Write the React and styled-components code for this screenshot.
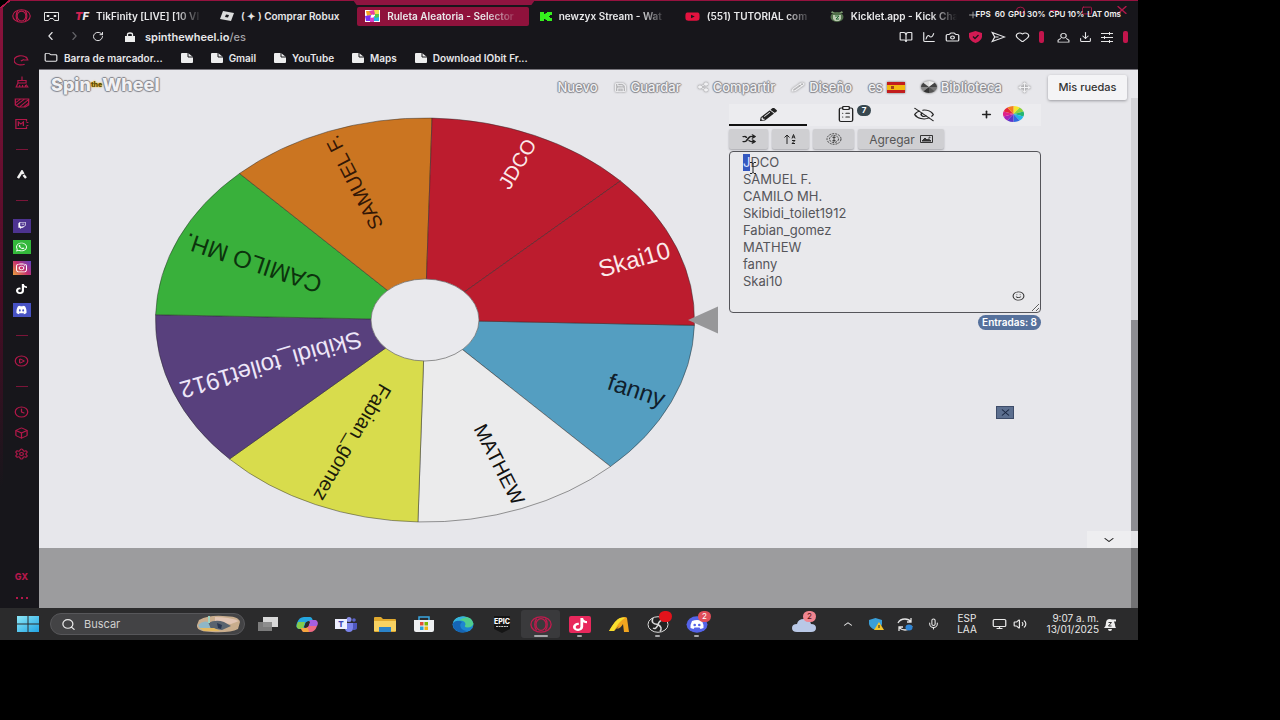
import React, { useEffect, useRef } from "react";
import styled, { createGlobalStyle, css } from "styled-components";
import {
  ChevronLeft, ChevronRight, RotateCw, Lock, Folder, BookOpen, ChartSpline, Camera, SendHorizontal, Heart,
  User, Download, Plus, X, Save, Share2, Pencil, Move, EyeOff, ClipboardList, Shuffle, Smile, Clock, Box as BoxIcon,
  Settings, CirclePlay, ChevronDown, ChevronUp, Mic, Monitor, Volume2, RefreshCw, Search, Square, Minus,
} from "lucide-react";
import { FaTwitch, FaWhatsapp, FaInstagram, FaTiktok, FaDiscord, FaYoutube, FaPencilAlt } from "react-icons/fa";

const pink = "#b3184a";
const ui = '"Inter", "Open Sans", sans-serif';

const GlobalStyle = createGlobalStyle`
  * { box-sizing: border-box; }
  body { margin: 0; background: #000; font-family: ${ui}; }
  button, textarea, input { font: inherit; color: inherit; }
  button { border: 0; background: none; padding: 0; }
  a { color: inherit; text-decoration: none; }
  svg { display: block; flex: none; }
`;

const Screen = styled.div`
  min-height: 100vh;
  padding: 0 142px 80px 0;
  display: flex;
  background: #000;
`;
const Desktop = styled.div`
  flex: 1;
  min-width: 0;
  display: flex;
  flex-direction: column;
`;
const Browser = styled.div`
  position: relative;
  flex: 1;
  display: flex;
  background: #17161b;
  border-top: 1px solid #96123f;
`;
const EdgeGlow = styled.div`
  position: absolute;
  left: 0;
  top: 6px;
  width: 3px;
  height: 480px;
  background: linear-gradient(#8d133d, #4a0c25 60%, #17161b);
`;
const TabNotch = styled.div`
  position: absolute;
  left: 353px;
  top: -1px;
  width: 182px;
  height: 5px;
  background: #8f1440;
  clip-path: polygon(0 0, 100% 0, 98% 100%, 2% 100%);
`;
const Corner = styled.div`
  position: absolute;
  left: 0;
  top: -1px;
  width: 10px;
  height: 8px;
  background: linear-gradient(141deg, #000 45%, ${pink} 46%, ${pink} 58%, transparent 59%);
`;

/* ---- side bar ---- */
const Side = styled.nav`
  width: 39px;
  display: flex;
  flex-direction: column;
  padding-left: 4px;
  color: ${pink};
`;
const SideButton = styled.button`
  height: 21px;
  display: flex;
  align-items: center;
  justify-content: center;
`;
const SideHome = styled(SideButton)`
  height: 30px;
  margin-bottom: 19px;
`;
const Divider = styled.div`
  height: 30px;
  display: flex;
  align-items: center;
  justify-content: center;
  &::after { content: ""; width: 12px; height: 1px; background: #7b1539; }
`;
const Spacer = styled.div`flex: 1;`;
const AppTile = styled.span`
  width: ${(p) => p.$w || 18}px;
  height: ${(p) => p.$h || 14}px;
  border-radius: ${(p) => (p.$w ? 2 : 0)}px;
  display: flex;
  align-items: center;
  justify-content: center;
  background: ${(p) => p.$bg};
  color: #fff;
`;
const GX = styled.b`font-size: 9px; font-weight: 800;`;

const IconBox = styled.span`
  display: inline-flex;
  flex: none;
  svg { width: ${(p) => p.$w}px; height: ${(p) => p.$h}px; }
`;
const Icon = ({ of: Glyph, w = 14, h = 12, ...rest }) => (
  <IconBox $w={w} $h={h}><Glyph preserveAspectRatio="none" aria-hidden="true" {...rest} /></IconBox>
);

/* ---- browser chrome ---- */
const Main = styled.div`
  flex: 1;
  min-width: 0;
  display: flex;
  flex-direction: column;
`;
const Chrome = styled.header`
  height: 69px;
  display: flex;
  flex-direction: column;
  color: #e8e8ea;
  font-size: 10px;
  font-weight: 600;
  border-bottom: 1px solid #77757c;
`;
const TabRow = styled.div`
  height: 27px;
  padding-top: 3px;
  display: flex;
  align-items: center;
`;
const Pinned = styled.button`
  width: 28px;
  display: flex;
  justify-content: flex-end;
  padding-right: 8px;
  padding-left: 12px;
`;
const Tabs = styled.div`
  flex: 1;
  min-width: 0;
  display: flex;
  align-items: center;
`;
const Tab = styled.button`
  flex: 29 1 0;
  min-width: 0;
  height: 19px;
  display: flex;
  align-items: center;
  gap: 7px;
  padding: 0 10px 0 8px;
  ${(p) => p.$active && css`
    flex-grow: 35;
    margin-right: 3px;
    background: #8f123c;
    border-radius: 2px;
  `}
`;
const TabText = styled.span`
  flex: 1;
  min-width: 0;
  overflow: hidden;
  white-space: nowrap;
  text-align: left;
  ${(p) => p.$fade && css`mask-image: linear-gradient(90deg, #000 75%, transparent);`}
`;
const WindowArea = styled.div`
  width: 171px;
  height: 24px;
  position: relative;
  display: flex;
  align-items: center;
  color: ${pink};
`;
const WindowButtons = styled.div`
  flex: 1;
  display: flex;
  justify-content: flex-end;
  align-items: center;
  gap: 21px;
  padding: 0 8px 10px 0;
`;
const NewTab = styled.button`color: #aaa;`;
const Stats = styled.div`
  position: absolute;
  right: 17px;
  top: 4px;
  display: flex;
  gap: 3px;
  color: #f2f2f2;
  font: 600 8px/12px ${ui};
  white-space: nowrap;
`;
const AddressRow = styled.div`
  height: 18px;
  display: flex;
  align-items: center;
  padding: 0 10px 0 5px;
`;
const AddressNav = styled.div`
  display: flex;
  align-items: center;
  gap: 11px;
  margin-right: 21px;
`;
const Url = styled.span`
  margin-left: 10px;
  font-size: 11px;
  span { color: #a5a5aa; font-weight: 500; }
`;
const Tools = styled.div`
  margin-left: auto;
  display: flex;
  align-items: center;
  gap: 9px;
`;
const PinkBar = styled.i`
  width: 5px;
  height: 12px;
  border-radius: 2px;
  background: #c2154c;
  margin-right: ${(p) => (p.$gap ? 4 : 0)}px;
`;
const Bookmarks = styled.div`
  height: 23px;
  display: flex;
  align-items: center;
  gap: 18px;
  padding-left: 5px;
  a { display: flex; align-items: center; gap: 6px; white-space: nowrap; }
`;

/* ---- web page ---- */
const Viewport = styled.div`
  flex: 1;
  display: flex;
  background: #e7e7eb;
`;
const Page = styled.div`
  flex: 1;
  min-width: 0;
  display: flex;
  flex-direction: column;
`;
const SiteHeader = styled.header`
  height: 30px;
  display: flex;
  align-items: center;
  padding: 4px 4px 0 12px;
  color: #f1f1f3;
  font-size: 13px;
  font-weight: 500;
`;
const outline = css`
  text-shadow: 1px 0 1px #85858b, -1px 0 1px #85858b, 0 1px 1px #85858b, 0 -1px 1px #85858b;
`;
const Logo = styled.a`
  display: flex;
  align-items: center;
  font-size: 18px;
  line-height: 20px;
  font-weight: 800;
  padding-bottom: 4px;
  ${outline}
  small {
    font-size: 7px;
    line-height: 8px;
    color: #5b4a10;
    text-shadow: 0 0 2px #eab308, 0 0 1px #eab308;
  }
`;
const SiteNav = styled.nav`
  margin-left: auto;
  display: flex;
  align-items: center;
  gap: 16px;
  margin-right: 17px;
  a { display: flex; align-items: center; gap: 4px; ${outline} }
  svg { filter: drop-shadow(0 0 1px #666); }
`;
const MyWheels = styled.button`
  width: 79px;
  height: 25px;
  background: #f4f4f6;
  border-radius: 2px;
  box-shadow: 0 1px 3px #9a9a9f;
  color: #333;
  font-size: 11px;
  font-weight: 500;
`;
const Body = styled.main`
  flex: 1;
  display: grid;
  grid-template-columns: minmax(0, 1fr) 312px;
  padding-right: 90px;
  align-items: start;
`;
const WheelPane = styled.section`
  display: flex;
  justify-content: flex-end;
  padding: 17px 9px 0 0;
  svg { width: 100%; max-width: 565px; height: auto; }
`;
const Panel = styled.section`
  padding-top: 4px;
  display: flex;
  flex-direction: column;
  color: #222;
`;
const PanelTabs = styled.div`
  display: grid;
  grid-template-columns: repeat(4, 1fr);
  height: 22px;
  background: #ececef;
`;
const PanelTab = styled.button`
  position: relative;
  display: flex;
  align-items: center;
  justify-content: center;
  gap: 10px;
  border-bottom: 2px solid ${(p) => (p.$active ? "#111" : "transparent")};
`;
const Badge = styled.span`
  position: absolute;
  right: 14px;
  top: 1px;
  width: 14px;
  height: 11px;
  border-radius: 6px;
  background: #37474f;
  color: #fff;
  font-size: 8px;
  line-height: 11px;
  font-weight: 700;
`;
const ToolRow = styled.div`
  display: flex;
  gap: 4px;
  padding: 3px 0 2px;
`;
const ToolButton = styled.button`
  width: ${(p) => p.$w}px;
  height: 20px;
  display: flex;
  align-items: center;
  justify-content: center;
  gap: 5px;
  border-radius: 2px;
  background: #cfcfd2;
  box-shadow: 0 1px 2px #a5a5aa;
  color: ${(p) => (p.$muted ? "#555" : "#222")};
  font-size: ${(p) => (p.$muted ? 12 : 11)}px;
`;
const EntriesBox = styled.div`
  position: relative;
  display: flex;
`;
const Entries = styled.textarea`
  width: 100%;
  height: 162px;
  padding: 2px 13px;
  border: 1px solid #55555a;
  border-radius: 4px;
  background: #e9e9ec;
  color: #55555a;
  font-size: 13px;
  line-height: 17px;
  outline: 0;
  &::selection { background: #3558c0; color: #dfe6ff; }
`;
const EmojiButton = styled.button`
  position: absolute;
  right: 16px;
  bottom: 8px;
  color: #333;
`;
const Pointer = styled.svg`
  position: absolute;
  left: 20px;
  top: 11px;
`;
const Count = styled.span`
  align-self: flex-end;
  margin-top: 2px;
  padding: 0 4px;
  border-radius: 8px;
  background: #56719c;
  color: #fff;
  font-size: 10px;
  line-height: 15px;
  font-weight: 600;
`;
const CloseAd = styled.button`
  align-self: flex-end;
  width: 18px;
  height: 13px;
  margin: 76px 27px 0 0;
  display: flex;
  align-items: center;
  justify-content: center;
  background: #5c6f8f;
  border: 1px solid #3d4c69;
  color: #16233d;
`;
const Collapse = styled.button`
  align-self: flex-end;
  width: 44px;
  height: 17px;
  display: flex;
  align-items: center;
  justify-content: center;
  background: #eeeef0;
  color: #222;
`;
const AdBand = styled.footer`
  height: 60px;
  background: #9c9c9e;
`;
const ScrollTrack = styled.div`
  width: 7px;
  padding-top: 28px;
  display: flex;
  flex-direction: column;
`;
const ScrollPart = styled.div`
  ${(p) => (p.$h ? `height: ${p.$h}px;` : "flex: 1;")}
  background: ${(p) => p.$bg};
`;

/* ---- task bar ---- */
const Taskbar = styled.footer`
  height: 32px;
  display: flex;
  align-items: center;
  padding: 0 17px;
  background: #2b2b2c;
  color: #e9e9e9;
`;
const SearchBox = styled.label`
  width: 195px;
  height: 22px;
  margin: 0 3px 0 11px;
  display: flex;
  align-items: center;
  gap: 8px;
  padding: 0 3px 0 10px;
  border: 1px solid #57575a;
  border-radius: 11px;
  background: #434345;
  input {
    flex: 1;
    min-width: 0;
    padding: 0;
    border: 0;
    background: none;
    font-size: 11px;
    outline: 0;
  }
  input::placeholder { color: #d0d0d0; opacity: 1; }
`;
const TaskButton = styled.button`
  position: relative;
  width: 39px;
  height: 28px;
  display: flex;
  align-items: center;
  justify-content: center;
  border-radius: 3px;
  background: ${(p) => (p.$active ? "#3a3a3c" : "none")};
  &::after {
    content: "";
    position: absolute;
    bottom: 1px;
    width: ${(p) => (p.$active ? 14 : p.$open ? 5 : 0)}px;
    height: 2px;
    border-radius: 1px;
    background: #a8a8aa;
  }
`;
const Notice = styled.span`
  position: absolute;
  right: ${(p) => p.$right || 5}px;
  top: 1px;
  width: 13px;
  height: 11px;
  border-radius: 6px;
  background: ${(p) => p.$bg};
  color: ${(p) => p.$fg || "#fff"};
  font-size: 8px;
  line-height: 11px;
`;
const Tray = styled.div`
  margin-left: auto;
  display: flex;
  align-items: center;
`;
const TrayButton = styled.button`
  position: relative;
  width: ${(p) => p.$w}px;
  height: 28px;
  display: flex;
  align-items: center;
  justify-content: center;
`;
const TrayText = styled.div`
  width: ${(p) => p.$w}px;
  font-size: 10px;
  line-height: 11px;
  white-space: nowrap;
  text-align: ${(p) => p.$align || "center"};
`;

const OperaLogo = ({ w, h }) => (
  <svg width={w} height={h} viewBox="0 0 20 16" preserveAspectRatio="none" fill="none" stroke="#c01b4e" strokeWidth="1.2" aria-hidden="true">
    <ellipse cx="10" cy="8" rx="9.2" ry="7.2" />
    <ellipse cx="10" cy="8" rx="4.6" ry="5.6" />
    <path d="M6 2.4C3.8 5 3.8 11 6 13.6M14 2.4c2.2 2.6 2.2 8.6 0 11.2" />
  </svg>
);
const PageIcon = () => (
  <svg width="12" height="10" viewBox="0 0 12 10" fill="#ededee" aria-hidden="true">
    <path d="M0 1q0-1 1-1h6l5 4v5q0 1-1 1H1Q0 10 0 9z" /><path d="M7 0v4h5" fill="none" stroke="#17161b" />
  </svg>
);
const Broom = (p) => (
  <svg viewBox="0 0 24 24" fill="none" stroke="currentColor" strokeWidth="2" {...p}>
    <path d="M12 1v8M5 9h14v5H5zM5 14l-3 8h20l-3-5M8 22v-4M13 22v-4M18 22v-4" />
  </svg>
);
const Screencap = (p) => (
  <svg viewBox="0 0 24 24" fill="none" stroke="currentColor" strokeWidth="2" {...p}>
    <path d="M2 4h20v12l-5 4H7l-5-4zM3 11l7-7M3 17 16 4M9 19 21 6M15 19l7-7" />
  </svg>
);
const Modbox = (p) => (
  <svg viewBox="0 0 24 24" fill="none" stroke="currentColor" strokeWidth="2" {...p}>
    <path d="M20 7V3H3v18h17v-4M7 16V8l4 4 4-4v8M20 9h3M20 15h3" />
  </svg>
);
const Speed = (p) => (
  <svg viewBox="0 0 24 24" fill="none" stroke="currentColor" strokeWidth="2.400" {...p}>
    <path d="M17 20a11 10 0 1 1 5-9h-6M11 13l5-3M19 4l2 3" />
  </svg>
);
const Peak = () => (
  <svg width="10" height="9" viewBox="0 0 10 9" fill="none" stroke="#f0f0f0" strokeWidth="2.4" aria-hidden="true">
    <path d="M1 8 5 1.5 6.5 4M6.500 5 9 8" />
  </svg>
);
const Goggles = () => (
  <svg width="15" height="9" viewBox="0 0 15 9" fill="none" stroke="#e5e5e5" aria-hidden="true">
    <path d="M.5.5h14v8h-4l-1.500-2h-3l-1.500 2h-4z" /><path d="M3 3.500h2v1H3zM10 3.500h2v1h-2z" />
  </svg>
);
const Monogram = styled.i`
  width: 14px;
  font-size: 11px;
  line-height: 12px;
  font-weight: 800;
  color: #eee;
  b { color: #d32352; }
`;
const Roblox = () => (
  <svg width="14" height="10" viewBox="0 0 14 10" aria-hidden="true">
    <path d="M3 0 14 2 11 10 0 8z" fill="#dcdcdc" /><path d="M6 3.500 9 4 8 6.500 5 6z" fill="#17161b" />
  </svg>
);
const RouletteIcon = () => (
  <svg width="15" height="12" viewBox="0 0 15 12" aria-hidden="true">
    <path fill="#fff" d="M0 0h15v12H0z" />
    <path d="M1 1h4l2 4-5 1z" fill="#f5a623" /><path d="M9 0h5v4l-5 1z" fill="#f4e04d" />
    <path d="M0 6l6-1-1 6H1z" fill="#7b2ff2" /><path d="M9 6l5 1v4H7z" fill="#28b6e8" /><path d="M4 1l5-1 1 4-3 2z" fill="#e83fa0" /><path d="M10 4h4v3l-4 1z" fill="#56c94a" /><path d="M5 8l4-1v5H5z" fill="#d840c8" />
    <circle cx="7.500" cy="6" r="1.500" fill="#fff" />
  </svg>
);
const Kick = () => (
  <svg width="12" height="9" viewBox="0 0 12 9" fill="#35f01d" aria-hidden="true">
    <path d="M0 0h4v2h1.500V1H7V0h5v3h-2v1H9v1h1v1h2v3H7V8H5.500V7H4v2H0z" />
  </svg>
);
const Kicklet = () => (
  <svg width="14" height="11" viewBox="0 0 14 11" aria-hidden="true">
    <ellipse cx="7" cy="6" rx="6.500" ry="5" fill="#52704b" /><path d="M2 0 5 2H1zM12 0 9 2h4z" fill="#7d9a73" />
    <path d="M3 4h8v4l-2 2H5L3 8z" fill="#b9c9b0" /><path d="M5 5h4L6 8h3" stroke="#263" fill="none" />
  </svg>
);
const ShieldCheck = () => (
  <svg width="13" height="12" viewBox="0 0 13 12" aria-hidden="true">
    <path d="M6.500 0 13 2v4q-1 4-6.500 6Q1 10 0 6V2z" fill="#d11a53" /><path d="m4 5.500 2 2 3.500-3.500" fill="none" stroke="#17161b" strokeWidth="1.300" />
  </svg>
);
const SendArrow = (p) => (
  <svg viewBox="0 0 24 24" fill="none" stroke="currentColor" strokeWidth="2" {...p}>
    <path d="M2 3 22 12 2 21l4-9zM6 12h6" />
  </svg>
);
const Person = (p) => (
  <svg viewBox="0 0 24 24" fill="none" stroke="currentColor" strokeWidth="2" {...p}>
    <circle cx="12" cy="8" r="5" /><path d="M7 14 2 18v4h20v-4l-5-4" />
  </svg>
);
const Sliders = () => (
  <svg width="13" height="11" viewBox="0 0 13 11" fill="none" stroke="#e5e5e5" aria-hidden="true">
    <path d="M0 1.500h12M0 5.500h12M0 9.500h12M8.500 0v3M3.500 4v3M8.500 8v3" />
  </svg>
);
const SpainFlag = () => (
  <svg width="18" height="11" viewBox="0 0 18 11" aria-hidden="true">
    <path fill="#c21d1d" d="M0 0h18v11H0z" /><path fill="#f2b90f" d="M0 3h18v5H0z" /><path fill="#a5421a" d="M4 4h3v3H4z" />
  </svg>
);
const pieColors = ["#f6e52b", "#8bd33c", "#23b573", "#22b5e9", "#2d6be0", "#5d35c9", "#a724b8", "#e0218a", "#e5273b", "#f47d20"];
const Pie = ({ w, h, colors }) => (
  <svg width={w} height={h} viewBox="-10 -10 20 20" preserveAspectRatio="none" aria-hidden="true">
    {colors.map((c, i) => {
      const a = (i * 2 * Math.PI) / colors.length - 1.57;
      const b = a + (2 * Math.PI) / colors.length;
      return <path key={i} fill={c} d={`M0 0L${10 * Math.cos(a)} ${10 * Math.sin(a)}A10 10 0 0 1 ${10 * Math.cos(b)} ${10 * Math.sin(b)}z`} />;
    })}
  </svg>
);
const SortIcon = () => (
  <svg width="13" height="10" viewBox="0 0 13 10" fill="none" stroke="#222" aria-hidden="true">
    <path d="M3 10V1M.5 3.500 3 1l2.500 2.500M8 4.500l1.500-4 1.500 4M8.500 3h2M8 6.500h3L8 9.500h3" />
  </svg>
);
const SpiralIcon = () => (
  <svg width="16" height="12" viewBox="0 0 16 12" fill="none" stroke="#444" aria-hidden="true">
    <ellipse cx="8" cy="6" rx="7" ry="5.300" strokeDasharray="2 1" /><ellipse cx="8" cy="6" rx="4.500" ry="3.500" strokeDasharray="2 1" />
    <path d="M8 3v6M6.500 4.500h3M6.500 7.500h3" />
  </svg>
);
const ImageIcon = () => (
  <svg width="13" height="8" viewBox="0 0 13 8" fill="none" stroke="#333" aria-hidden="true">
    <path d="M.5.5h12v7H.5z" /><path d="m2 6 3-3 2 2 1.500-1L11 6z" fill="#333" /><circle cx="9.500" cy="2.500" r=".5" />
  </svg>
);

/* ---- wheel ---- */
const slices = [
  { text: "fanny", fill: "#549ec1", ink: "#10202c", size: 24 },
  { text: "MATHEW", fill: "#ebebec", ink: "#111", size: 20 },
  { text: "Fabian_gomez", fill: "#d8dc4c", ink: "#1d1d0a", size: 20 },
  { text: "Skibidi_toilet1912", fill: "#58407d", ink: "#eee6f8", size: 24 },
  { text: "CAMILO MH.", fill: "#39b03b", ink: "#0c330d", size: 24 },
  { text: "SAMUEL F.", fill: "#cb7521", ink: "#331706", size: 20 },
  { text: "JDCO", fill: "#bc1c2e", ink: "#fbe9ea", size: 20 },
  { text: "Skai10", fill: "#bc1c2e", ink: "#fbe9ea", size: 24 },
];
const CX = 425, CY = 320, RX = 269.5, RY = 202;
const at = (deg, k = 1) => {
  const t = (deg * Math.PI) / 180;
  return [CX + k * RX * Math.cos(t), CY + k * RY * Math.sin(t)];
};
const Wheel = () => (
  <svg viewBox="155 117 565 406" role="img" aria-label="Ruleta" fontFamily='"Liberation Sans", Arial, sans-serif'>
    {slices.map((s, i) => {
      const start = 1.5 + i * 45;
      const [x1, y1] = at(start);
      const [x2, y2] = at(start + 45);
      return <path key={s.text} d={`M${CX} ${CY}L${x1} ${y1}A${RX} ${RY} 0 0 1 ${x2} ${y2}z`} fill={s.fill} stroke="#2b2b2b" strokeOpacity=".6" strokeWidth=".8" />;
    })}
    {slices.map((s, i) => {
      const [x, y] = at(24 + i * 45, 0.972);
      const turn = (Math.atan2(y - CY, x - CX) * 180) / Math.PI;
      return (
        <text key={s.text} transform={`translate(${x} ${y}) rotate(${turn})`} textAnchor="end" dy=".33em" fontSize={s.size} fill={s.ink}>{s.text}</text>
      );
    })}
    <ellipse cx={CX} cy={CY} rx="54" ry="41" fill="#e9e9ed" stroke="#666" strokeWidth=".7" />
    <path d="M688 320 718 306.500v27z" fill="#979799" />
  </svg>
);

const names = ["JDCO", "SAMUEL F.", "CAMILO MH.", "Skibidi_toilet1912", "Fabian_gomez", "MATHEW", "fanny", "Skai10"];

const EntriesEditor = () => {
  const ref = useRef(null);
  useEffect(() => {
    ref.current.focus({ preventScroll: true });
    ref.current.setSelectionRange(0, 1);
  }, []);
  return (
    <EntriesBox>
      <Entries ref={ref} aria-label="Lista de entradas" spellCheck={false} defaultValue={names.join("\n")} />
      <Pointer width="8" height="12" viewBox="0 0 8 12" fill="none" stroke="#222" aria-hidden="true"><path d="M1 .5h2l1 1 1-1h2M4 1v10M1 11.500h2l1-1 1 1h2" /></Pointer>
      <EmojiButton aria-label="Emoji"><Icon of={Smile} w={13} h={10} /></EmojiButton>
    </EntriesBox>
  );
};

const tabs = [
  { icon: <Monogram><b>T</b>F</Monogram>, text: "TikFinity [LIVE] [10 VI", fade: true },
  { icon: <Roblox />, text: "( ✦ ) Comprar Robux" },
  { icon: <RouletteIcon />, text: "Ruleta Aleatoria - Selector", active: true, fade: true },
  { icon: <Kick />, text: "newzyx Stream - Wat", fade: true },
  { icon: <IconBox $w={15} $h={11}><FaYoutube color="#e3123f" preserveAspectRatio="none" /></IconBox>, text: "(551) TUTORIAL com", fade: true },
  { icon: <Kicklet />, text: "Kicklet.app - Kick Cha", fade: true },
];
const tiles = [
  [FaTwitch, "#4d3390", "Twitch"],
  [FaWhatsapp, "#33b83b", "WhatsApp"],
  [FaInstagram, "linear-gradient(45deg, #e9a33c, #c52f70 50%, #5b43c4)", "Instagram"],
  [FaTiktok, "none", "TikTok"],
  [FaDiscord, "#4752c4", "Discord"],
];

const Sidebar = () => (
  <Side>
    <SideHome aria-label="Opera"><OperaLogo w={19} h={14} /></SideHome>
    <SideButton aria-label="GX Control"><Icon of={Speed} w={15} h={11} /></SideButton>
    <SideButton aria-label="GX Cleaner"><Icon of={Broom} w={14} h={12} /></SideButton>
    <SideButton aria-label="Captura"><Icon of={Screencap} w={16} h={12} /></SideButton>
    <SideButton aria-label="Mods"><Icon of={Modbox} w={15} h={12} /></SideButton>
    <Divider />
    <SideButton aria-label="Pico"><Peak /></SideButton>
    <Divider />
    {tiles.map(([Glyph, bg, name]) => (
      <SideButton key={name} aria-label={name}><AppTile $bg={bg}><Icon of={Glyph} w={name === "Twitch" ? 8 : 11} h={name === "Twitch" ? 7 : 10} /></AppTile></SideButton>
    ))}
    <Divider />
    <SideButton aria-label="Reproductor"><Icon of={CirclePlay} w={15} h={12} /></SideButton>
    <Divider />
    <SideButton aria-label="Historial"><Icon of={Clock} w={15} h={12} /></SideButton>
    <SideButton aria-label="Extensiones"><Icon of={BoxIcon} w={15} h={12} /></SideButton>
    <SideButton aria-label="Ajustes"><Icon of={Settings} w={15} h={12} /></SideButton>
    <Spacer />
    <SideButton><GX>GX</GX></SideButton>
    <SideButton aria-label="Más"><svg width="12" height="2" viewBox="0 0 12 2" fill={pink}><path d="M0 0h2v2H0zM5 0h2v2H5zM10 0h2v2h-2z" /></svg></SideButton>
  </Side>
);

const BrowserChrome = () => (
  <Chrome>
    <TabRow>
      <Pinned aria-label="GX Corner"><Goggles /></Pinned>
      <Tabs>
        {tabs.map((t) => (
          <Tab key={t.text} $active={t.active}>{t.icon}<TabText $fade={t.fade}>{t.text}</TabText></Tab>
        ))}
      </Tabs>
      <WindowArea>
        <NewTab aria-label="Nueva pestaña"><Icon of={Plus} w={12} h={10} /></NewTab>
        <WindowButtons>
          <button aria-label="Buscar pestañas"><Icon of={Search} w={12} h={9} /></button>
          <button aria-label="Minimizar"><Icon of={Minus} w={12} h={9} /></button>
          <button aria-label="Restaurar"><Icon of={Square} w={12} h={9} /></button>
          <button aria-label="Cerrar"><Icon of={X} w={16} h={14} /></button>
        </WindowButtons>
        <Stats><span>FPS&nbsp; 60</span><span>GPU 30%</span><span>CPU 10%</span><span>LAT 0ms</span></Stats>
      </WindowArea>
    </TabRow>
    <AddressRow>
      <AddressNav>
        <button aria-label="Atrás"><Icon of={ChevronLeft} w={13} h={14} /></button>
        <button aria-label="Adelante"><Icon of={ChevronRight} w={13} h={14} color="#66666b" /></button>
        <button aria-label="Recargar"><Icon of={RotateCw} w={12} h={11} /></button>
      </AddressNav>
      <svg width="10" height="10" viewBox="0 0 10 10" aria-hidden="true"><path d="M0 4h10v6H0z" fill="#eee" /><path d="M2.500 4V2.500Q2.500 1 5 1t2.500 1.500V4" fill="none" stroke="#eee" strokeWidth="1.300" /></svg>
      <Url>spinthewheel.io<span>/es</span></Url>
      <Tools>
        <Icon of={BookOpen} w={14} h={12} />
        <Icon of={ChartSpline} w={14} h={12} />
        <Icon of={Camera} w={15} h={12} />
        <ShieldCheck />
        <Icon of={SendArrow} w={15} h={12} />
        <Icon of={Heart} w={15} h={12} />
        <PinkBar $gap />
        <Icon of={Person} w={13} h={11} />
        <Icon of={Download} w={13} h={12} />
        <Sliders />
        <PinkBar />
      </Tools>
    </AddressRow>
    <Bookmarks>
      <a href="#marcadores"><Icon of={Folder} w={14} h={11} />Barra de marcador...</a>
      <a href="#pagina" aria-label="Marcador"><PageIcon /></a>
      <a href="#gmail"><PageIcon />Gmail</a>
      <a href="#youtube"><PageIcon />YouTube</a>
      <a href="#maps"><PageIcon />Maps</a>
      <a href="#iobit"><PageIcon />Download IObit Fr...</a>
    </Bookmarks>
  </Chrome>
);

const WebPage = () => (
  <Viewport>
    <Page>
      <SiteHeader>
        <Logo href="#inicio">Spin<small>the</small>Wheel</Logo>
        <SiteNav>
          <a href="#nuevo">Nuevo</a>
          <a href="#guardar"><Icon of={Save} w={13} h={11} />Guardar</a>
          <a href="#compartir"><Icon of={Share2} w={12} h={10} fill="currentColor" />Compartir</a>
          <a href="#diseno"><Icon of={Pencil} w={14} h={10} />Diseño</a>
          <a href="#es">es <SpainFlag /></a>
          <a href="#biblioteca"><Pie w={16} h={12} colors={["#eee", "#444", "#777", "#555", "#333", "#888", "#444", "#ddd"]} />Biblioteca</a>
          <a href="#pantalla" aria-label="Pantalla completa"><Icon of={Move} w={13} h={11} /></a>
        </SiteNav>
        <MyWheels>Mis ruedas</MyWheels>
      </SiteHeader>
      <Body>
        <WheelPane><Wheel /></WheelPane>
        <Panel>
          <PanelTabs>
            <PanelTab $active aria-label="Editar"><Icon of={FaPencilAlt} w={17} h={13} /></PanelTab>
            <PanelTab aria-label="Resultados"><Icon of={ClipboardList} w={20} h={18} strokeWidth={1.6} /><Badge>7</Badge></PanelTab>
            <PanelTab aria-label="Ocultar"><Icon of={EyeOff} w={22} h={15} strokeWidth={1.6} /></PanelTab>
            <PanelTab aria-label="Añadir rueda"><Icon of={Plus} w={13} h={11} strokeWidth={3} /><Pie w={21} h={16} colors={pieColors} /></PanelTab>
          </PanelTabs>
          <ToolRow>
            <ToolButton $w={39} aria-label="Mezclar"><Icon of={Shuffle} w={14} h={10} strokeWidth={3} /></ToolButton>
            <ToolButton $w={37} aria-label="Ordenar"><SortIcon /></ToolButton>
            <ToolButton $w={41} aria-label="Opciones"><SpiralIcon /></ToolButton>
            <ToolButton $w={86} $muted>Agregar <ImageIcon /></ToolButton>
          </ToolRow>
          <EntriesEditor />
          <Count>Entradas: 8</Count>
          <CloseAd aria-label="Cerrar anuncio"><Icon of={X} w={13} h={11} /></CloseAd>
        </Panel>
      </Body>
      <Collapse aria-label="Contraer"><Icon of={ChevronDown} w={16} h={12} /></Collapse>
      <AdBand />
    </Page>
    <ScrollTrack>
      <ScrollPart $h={222} $bg="#d4d4d8" />
      <ScrollPart $bg="#8d8d92" />
      <ScrollPart $h={17} $bg="#e4e4e7" />
      <ScrollPart $h={60} $bg="#727274" />
    </ScrollTrack>
  </Viewport>
);

const Art = ({ w = 22, h = 17, children }) => <svg width={w} height={h} viewBox="0 0 22 17" aria-hidden="true">{children}</svg>;

const TaskbarView = () => (
  <Taskbar>
    <button aria-label="Inicio">
      <svg width="22" height="16" viewBox="0 0 22 16" fill="url(#winFill)"><defs><linearGradient id="winFill" x2="1" y2="1"><stop stopColor="#8de8f7" /><stop offset="1" stopColor="#21a4e4" /></linearGradient></defs><path d="M0 0h10.500v7.500H0zM11.500 0H22v7.500H11.500zM0 8.500h10.500V16H0zM11.500 8.500H22V16H11.500z" /></svg>
    </button>
    <SearchBox>
      <Icon of={Search} w={15} h={13} />
      <input aria-label="Buscar" placeholder="Buscar" />
      <svg width="44" height="18" viewBox="0 0 44 18" aria-hidden="true">
        <path d="M2 5Q12 0 26 1q16 0 17 6l-2 7q-8 4-26 3Q-1 17 0 10z" fill="#c9ad8d" /><path d="M18 2q14 0 24 4l-8 3-16-1z" fill="#e2c5b4" />
        <path d="M11 8q8-4 16-1l7 4-9 4-12-2z" fill="#59636f" /><path d="m20 8 5 2-1 4-3-1z" fill="#28354f" /><path d="M1 10q5-5 10-3l3 7-10 1z" fill="#8fb7c5" /><path d="M2 13h15l6 3H7z" fill="#e3b960" /><path d="M12 1v7" stroke="#9fd3bf" strokeWidth="2" />
      </svg>
    </SearchBox>
    <TaskButton aria-label="Vista de tareas"><Art><path d="M6 1h15v10H6z" fill="#d9d9d9" /><path d="M1 6h14v9H1z" fill="#858585" opacity=".9" /></Art></TaskButton>
    <TaskButton aria-label="Copilot"><Art><path d="M8 1h6q2 0 3 4h-4q-3 0-4 4l-1 4H3q-4-1-2-6 2-6 7-6z" fill="#25a7e0" /><path d="M2 6h7l-2 7H3q-4-1-1-7z" fill="#86cb4a" /><path d="M14 16H8q-2 0-3-4h4q3 0 4-4l1-4h5q4 1 2 6-2 6-7 6z" fill="#ef6a83" /><path d="M14 4h5q4 1 2 6h-8z" fill="#a65fe0" /><path d="M5 12h7l1 4H8q-2 0-3-4z" fill="#f5a53d" /><path d="m10 6h4l-2 5H8z" fill="#2b2b2c" /></Art></TaskButton>
    <TaskButton aria-label="Teams"><Art><circle cx="14" cy="3.500" r="2.500" fill="#8a8fe8" /><circle cx="19" cy="4" r="1.800" fill="#5a62c8" /><path d="M10 7h8v5q0 4-4 4t-4-4z" fill="#7b83eb" /><path d="M18 7h4v5q0 2-4 2z" fill="#4f57bd" /><path d="M0 3h12v10H0z" fill="#eef0ff" /><text x="6" y="11" textAnchor="middle" fontSize="8" fontWeight="800" fill="#3f48b5">T</text></Art></TaskButton>
    <TaskButton aria-label="Explorador"><Art><path d="M0 2q0-1 1-1h6l2 2h12q1 0 1 1v11q0 1-1 1H1q-1 0-1-1z" fill="#e0a92e" /><path d="M0 5h22v10H0z" fill="#f7d262" /><path d="M5 11h12v5H5z" fill="#2b83c9" /></Art></TaskButton>
    <TaskButton aria-label="Tienda"><Art><path d="M6 4V1h10v3" fill="none" stroke="#3aa6e0" strokeWidth="1.500" /><path d="M1 4h20v10q0 2-2 2H3q-2 0-2-2z" fill="#eef0f2" /><path d="M7 6h3.500v3.500H7z" fill="#e35038" /><path d="M11.500 6H15v3.500h-3.500z" fill="#7fba00" /><path d="M7 10.500h3.500V14H7z" fill="#2aa0da" /><path d="M11.500 10.500H15V14h-3.500z" fill="#f0b411" /></Art></TaskButton>
    <TaskButton aria-label="Edge"><Art><ellipse cx="11" cy="8.500" rx="10.500" ry="8" fill="#1e86d1" /><path d="M1 7Q3 .5 11 .5q9 0 10.500 7-1 4-6 4-4 0-2-3 0-4-6-4Q3 4.500 1 7z" fill="#4fcd8f" /><path d="M1 7Q3 .5 11 .5q2 0 4 1Q7 2 5 8z" fill="#35b3e0" /><path d="M1 7q4-4 9-1-3 2-1 6 2 3 7 3-9 4-14-3-1-2-1-5z" fill="#1565b5" /></Art></TaskButton>
    <TaskButton aria-label="Epic Games"><Art><path d="M3 0h16v13l-8 4-8-4z" fill="#151515" /><text x="11" y="8" textAnchor="middle" fontSize="7" fontWeight="800" fill="#fff">EPIC</text><path d="M5 10.500h12" stroke="#ccc" strokeDasharray="2 .6" /></Art></TaskButton>
    <TaskButton $active aria-label="Opera GX"><OperaLogo w={22} h={17} /></TaskButton>
    <TaskButton $open aria-label="TikTok Live Studio"><AppTile $w={22} $h={17} $bg="#e8285c"><Icon of={FaTiktok} w={14} h={13} /></AppTile></TaskButton>
    <TaskButton aria-label="Aplicación"><Art><path d="M1 15Q8 3 12 2q6-2 7 0l2 14h-5l-1-8q-2 4-6 5l2-3q-3 3-5 5z" fill="#f2a51f" /><path d="M1 15Q8 3 12 2q4-1 5 0-6 3-11 13z" fill="#f7df2f" /></Art></TaskButton>
    <TaskButton $open aria-label="OBS"><Art><g fill="none" stroke="#d8d8d8"><ellipse cx="11" cy="8.500" rx="10" ry="7.800" fill="#222" /><path d="M11 8.500Q3 8 6 2M11 8.500q2-6 8-4M11 8.500q5 3 2 7M6 12q3 2 5-3.500" strokeWidth="1.500" /></g></Art><Notice $bg="#e3131b" /></TaskButton>
    <TaskButton $open aria-label="Discord"><Art><ellipse cx="11" cy="8.500" rx="10.500" ry="8.300" fill="#5463e8" /><path d="M6 5q5-2 10 0 2 4 1.500 7l-3 1-1-1.500h-5l-1 1.500-3-1Q4 9 6 5z" fill="#fff" /><ellipse cx="8.700" cy="9" rx="1.300" ry="1.200" fill="#5463e8" /><ellipse cx="13.300" cy="9" rx="1.300" ry="1.200" fill="#5463e8" /></Art><Notice $bg="#df4e59">2</Notice></TaskButton>
    <Tray>
      <TrayButton $w={60} aria-label="El tiempo"><svg width="24" height="15" viewBox="0 0 24 15"><path d="M5 15q-5 0-5-4t5-4q1-5 7-5t7 5q5 0 5 4t-5 4z" fill="#b9c8e6" /></svg><Notice $bg="#f08590" $fg="#511" $right={18}>2</Notice></TrayButton>
      <TrayButton $w={28} aria-label="Iconos ocultos"><Icon of={ChevronUp} w={14} h={10} /></TrayButton>
      <TrayButton $w={28} aria-label="Seguridad"><svg width="15" height="14" viewBox="0 0 15 14"><path d="M6.500 1 13 3v4q-1 4-6.500 6Q1 11 0 7V3z" fill="#3a9fd8" /><path d="m10 5 5 8H5z" fill="#f5c52b" /><path d="M10 8v3" stroke="#222" /></svg></TrayButton>
      <TrayButton $w={29} aria-label="Actualizar"><svg width="16" height="13" viewBox="0 0 16 13"><path d="M1 5q2-4 7-4 4 0 6 3M14 0v4h-4M15 8q-2 4-7 4-4 0-6-3M2 13V9h4" fill="none" stroke="#e5e5e5" strokeWidth="1.300" /><ellipse cx="12" cy="9.500" rx="3.500" ry="3" fill="#2f86d6" /></svg></TrayButton>
      <TrayButton $w={28} aria-label="Micrófono"><Icon of={Mic} w={13} h={12} /></TrayButton>
      <TrayText $w={40}>ESP<br />LAA</TrayText>
      <TrayButton $w={24} aria-label="Red"><Icon of={Monitor} w={15} h={12} /></TrayButton>
      <TrayButton $w={18} aria-label="Volumen"><Icon of={Volume2} w={14} h={12} /></TrayButton>
      <TrayText $w={70} $align="right">9:07 a. m.<br />13/01/2025</TrayText>
      <TrayButton $w={22} aria-label="Notificaciones"><svg width="14" height="13" viewBox="0 0 14 13" fill="#eee"><path d="M1 10q2-2 2-5 0-4 4-4 1 0 2 .5h4v2h-2l1 3q0 2 1 3.500zM5 11h4q0 2-2 2t-2-2z" /><path d="M5.500 4.500h3l-3 3.500h3" fill="none" stroke="#333" /></svg></TrayButton>
    </Tray>
  </Taskbar>
);

export default function App() {
  return (
    <>
      <GlobalStyle />
      <Screen>
        <Desktop>
          <Browser>
            <EdgeGlow />
            <Corner />
            <TabNotch />
            <Sidebar />
            <Main>
              <BrowserChrome />
              <WebPage />
            </Main>
          </Browser>
          <TaskbarView />
        </Desktop>
      </Screen>
    </>
  );
}
